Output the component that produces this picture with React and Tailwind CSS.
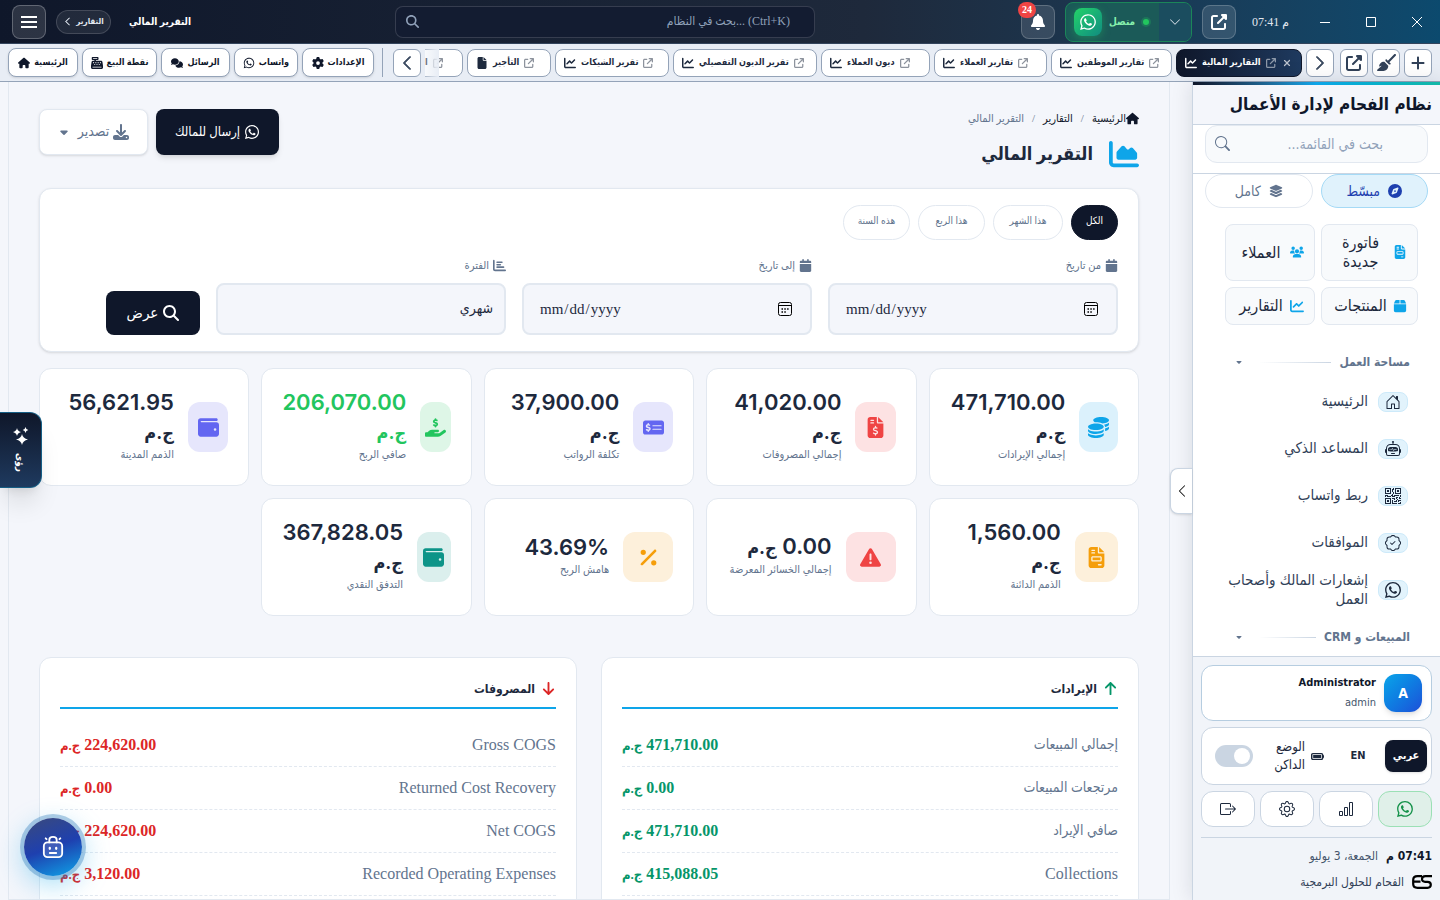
import React, { useState } from 'react';
import {
  FaArrowDown, FaArrowUp, FaArrowUpRightFromSquare, FaBatteryFull, FaBell, FaBox, FaBroom,
  FaCalendar, FaCaretDown, FaCashRegister, FaChartArea, FaChartBar, FaChartLine, FaCoins, FaComments,
  FaCompass, FaDownload, FaFile, FaFileInvoice, FaFileInvoiceDollar, FaGear, FaHandHoldingDollar,
  FaHouse, FaLayerGroup, FaMagnifyingGlass, FaMoneyCheckDollar, FaPercent, FaPlus,
  FaTriangleExclamation, FaUpRightFromSquare, FaUsers, FaWallet, FaWhatsapp, FaXmark,
} from 'react-icons/fa6';
import {
  BsBarChart, BsBoxArrowRight, BsChevronDown, BsChevronLeft, BsChevronRight, BsGear, BsHouseDoor,
  BsPatchCheck, BsQrCode, BsRobot, BsSearch, BsWhatsapp,
} from 'react-icons/bs';

const shortcuts = [
  { label: 'الرئيسية', icon: FaHouse, width: 'w-[70px]' },
  { label: 'نقطة البيع', icon: FaCashRegister, width: 'w-[75px]' },
  { label: 'الرسائل', icon: FaComments, width: 'w-[69px]' },
  { label: 'واتساب', icon: FaWhatsapp, width: 'w-[64px]' },
  { label: 'الإعدادات', icon: FaGear, width: 'w-[72px]' },
];

const openTabs = [
  { label: 'التقارير المالية', icon: FaChartLine, width: 'w-[126px]', active: true },
  { label: 'تقارير الموظفين', icon: FaChartLine, width: 'w-[121px]' },
  { label: 'تقارير العملاء', icon: FaChartLine, width: 'w-[113px]' },
  { label: 'ديون العملاء', icon: FaChartLine, width: 'w-[109px]' },
  { label: 'تقرير الديون التفصيلي', icon: FaChartLine, width: 'w-[144px]' },
  { label: 'تقرير الشيكات', icon: FaChartLine, width: 'w-[114px]' },
  { label: 'التأجير', icon: FaFile, width: 'w-[84px]' },
  { label: 'ا', icon: FaFile, width: 'w-[64px]' },
];

const cards = [
  { value: '471,710.00', currency: true, label: 'إجمالي الإيرادات', icon: FaCoins, tone: 'bg-[#dbf1fc] text-[#0ea5e9]' },
  { value: '41,020.00', currency: true, label: 'إجمالي المصروفات', icon: FaFileInvoiceDollar, tone: 'bg-[#fde2e3] text-[#ef4444]' },
  { value: '37,900.00', currency: true, label: 'تكلفة الرواتب', icon: FaMoneyCheckDollar, tone: 'bg-[#e6e6fc] text-[#6366f1]' },
  { value: '206,070.00', currency: true, label: 'صافي الربح', icon: FaHandHoldingDollar, tone: 'bg-[#def6e7] text-[#22c55e]', green: true },
  { value: '56,621.95', currency: true, label: 'الذمم المدينة', icon: FaWallet, tone: 'bg-[#e6e6fc] text-[#6366f1]' },
  { value: '1,560.00', currency: true, label: 'الذمم الدائنة', icon: FaFileInvoice, tone: 'bg-[#fdf0db] text-[#f59e0b]' },
  { value: '0.00', currency: true, label: 'إجمالي الخسائر المعرضة', icon: FaTriangleExclamation, tone: 'bg-[#fde2e3] text-[#ef4444]' },
  { value: '43.69%', label: 'هامش الربح', icon: FaPercent, tone: 'bg-[#fdf0db] text-[#f59e0b]' },
  { value: '367,828.05', currency: true, label: 'التدفق النقدي', icon: FaWallet, tone: 'bg-[#dbefed] text-[#0d9488]' },
];

const revenues = [
  { name: 'إجمالي المبيعات', amount: '471,710.00' },
  { name: 'مرتجعات المبيعات', amount: '0.00' },
  { name: 'صافي الإيراد', amount: '471,710.00' },
  { name: 'Collections', amount: '415,088.05', latin: true },
];

const expenses = [
  { name: 'Gross COGS', amount: '224,620.00', latin: true },
  { name: 'Returned Cost Recovery', amount: '0.00', latin: true },
  { name: 'Net COGS', amount: '224,620.00', latin: true },
  { name: 'Recorded Operating Expenses', amount: '3,120.00', latin: true },
];

const ranges = [
  { label: 'الكل', width: 'w-[47px]' },
  { label: 'هذا الشهر', width: 'w-[70px]' },
  { label: 'هذا الربع', width: 'w-[67px]' },
  { label: 'هذه السنة', width: 'w-[67px]' },
];

const menu = [
  { label: 'الرئيسية', icon: BsHouseDoor },
  { label: 'المساعد الذكي', icon: BsRobot },
  { label: 'ربط واتساب', icon: BsQrCode },
  { label: 'الموافقات', icon: BsPatchCheck },
  { label: 'إشعارات المالك وأصحاب العمل', icon: BsWhatsapp },
];

const TopBar = () => (
  <header className="flex h-11 shrink-0 items-center border-b border-[#33445c] bg-linear-to-r from-[#0f172a] via-[#1e293b] via-60% to-[#0c4a6e] px-3 text-white">
    <button aria-label="القائمة" className="flex size-[34px] items-center justify-center rounded-lg border border-white/25 bg-white/12">
      <svg width="16" height="14" viewBox="0 0 16 14" stroke="currentColor" strokeWidth="2"><path d="M0 2h16M0 7h16M0 12h16" /></svg>
    </button>
    <button className="ml-[10px] flex h-6 w-[55px] items-center justify-center gap-1 rounded-full border border-white/15 bg-white/8 text-[8px] font-bold whitespace-nowrap text-slate-200">
      <BsChevronLeft className="size-[9px] shrink-0 stroke-1" /> التقارير
    </button>
    <span className="ml-[18px] text-[10px] font-bold whitespace-nowrap">التقرير المالي</span>

    <div className="flex flex-1 justify-center pr-[2px]">
      <label className="relative w-[420px]">
        <FaMagnifyingGlass className="absolute top-[9px] left-[11px] size-[13px] text-slate-400" />
        <input type="text" placeholder="بحث في النظام... (Ctrl+K)"
          className="h-8 w-full rounded-lg border border-white/15 bg-[#131c31] pr-6 pl-9 text-right text-xs text-white placeholder-slate-400 focus:outline-none" />
      </label>
    </div>

    <button aria-label="الإشعارات" className="relative flex size-[34px] items-center justify-center rounded-lg border border-white/20 bg-white/12">
      <FaBell className="size-4" />
      <span className="absolute -top-1 -left-1 flex h-4 w-[18px] items-center justify-center rounded-full bg-[#ef4444] text-[10px] font-bold">24</span>
    </button>
    <div className="ml-[10px] flex h-10 w-[127px] overflow-hidden rounded-lg border border-[#1b8659] bg-[#1b5a58]">
      <button className="flex flex-1 items-center pl-2 text-[#86efac]">
        <span className="flex size-7 items-center justify-center rounded-lg bg-linear-to-br from-[#25d366] to-[#128c7e] text-white shadow-[0_2px_8px_#22c55e60]">
          <FaWhatsapp className="size-[18px]" />
        </span>
        <span className="ml-[7px] text-[10px] font-bold">متصل</span>
        <span className="ml-2 size-[6px] rounded-full bg-[#22c55e] shadow-[0_0_0_2px_#22c55e40]" />
      </button>
      <button aria-label="المزيد" className="flex w-8 items-center justify-center bg-[#1b4d5f] text-slate-200">
        <BsChevronDown className="size-3" />
      </button>
    </div>
    <button aria-label="نافذة جديدة" className="ml-[10px] flex size-[34px] items-center justify-center rounded-lg border border-white/20 bg-white/12">
      <FaUpRightFromSquare className="size-4" />
    </button>
    <span className="ml-4 w-9 text-xs whitespace-nowrap text-slate-200">07:41 م</span>
    <div className="ml-8 flex items-center gap-9 pr-[6px]">
      <button aria-label="تصغير"><svg width="10" height="10" viewBox="0 0 10 10" stroke="white"><path d="M0 5.5h10" /></svg></button>
      <button aria-label="تكبير"><svg width="10" height="10" viewBox="0 0 10 10" stroke="white" fill="none"><path d="M.5 .5h9v9h-9z" /></svg></button>
      <button aria-label="إغلاق"><svg width="10" height="10" viewBox="0 0 10 10" stroke="white"><path d="M0 0l10 10M10 0L0 10" /></svg></button>
    </div>
  </header>
);

const ToolButton = ({ label, children }) => (
  <button aria-label={label} className="flex h-7 w-7 shrink-0 items-center justify-center rounded-md border border-[#94a3b8] bg-white text-slate-700">
    {children}
  </button>
);

const TabBar = () => (
  <nav className="flex h-[38px] shrink-0 items-center border-b border-[#94a3b8] bg-[#e8edf5] px-2">
    <div className="flex gap-1">
      {shortcuts.map(({ label, icon: Icon, width }) => (
        <button key={label} className={`flex h-[29px] items-center justify-center gap-1 rounded-lg border border-[#94a3b8] bg-white text-[9px] font-bold whitespace-nowrap text-[#0f172a] shadow-sm ${width}`}>
          <Icon className="h-3 w-auto shrink-0" /> {label}
        </button>
      ))}
    </div>
    <span className="mx-2 h-[29px] w-px bg-[#94a3b8]" />
    <div className="flex min-w-0 flex-1 items-center gap-1 pl-[2px]">
      <ToolButton label="السابق"><BsChevronLeft className="size-4 stroke-1" /></ToolButton>
      <div className="relative min-w-0 flex-1 overflow-hidden">
        <div dir="rtl" className="flex gap-1">
          {openTabs.map(({ label, icon: Icon, width, active }) => (
            <button key={label} dir="ltr"
              className={`flex h-7 shrink-0 items-center gap-[5px] rounded-lg border pl-2 text-[9px] font-bold whitespace-nowrap ${width} ${active ? 'border-[#0f172a] bg-linear-to-r from-[#0f172a] to-[#1e3a5f] text-white' : 'border-[#94a3b8] bg-white text-slate-800'}`}>
              <Icon className="size-3 shrink-0" />
              {label}
              <FaArrowUpRightFromSquare className="size-[10px] shrink-0 opacity-50" />
              {active && <FaXmark className="ml-px size-[10px] shrink-0 opacity-70" />}
            </button>
          ))}
        </div>
        <span className="absolute top-0 left-0 h-7 w-[14px] bg-linear-to-r from-[#e8edf5]/30 to-[#e8edf5]" />
      </div>
      <ToolButton label="التالي"><BsChevronRight className="size-4 stroke-1" /></ToolButton>
    </div>
    <div className="ml-[6px] flex gap-1">
      <ToolButton label="فتح"><FaUpRightFromSquare className="size-4" /></ToolButton>
      <ToolButton label="تنظيف"><FaBroom className="size-[19px]" /></ToolButton>
      <ToolButton label="إضافة"><FaPlus className="size-4" /></ToolButton>
    </div>
  </nav>
);

const StatCard = ({ value, currency, label, icon: Icon, tone, green }) => (
  <div className="flex h-[118px] items-center gap-[14px] rounded-xl border border-slate-200 bg-white px-5">
    <div className={`flex h-[50px] w-[50px] items-center justify-center rounded-xl ${tone}`}>
      <Icon className="h-[21px] w-auto shrink-0" />
    </div>
    <div className="pb-[6px]">
      <div className={`font-[Inter,'DejaVu_Sans_Condensed',sans-serif] text-[22px] leading-[29px] font-semibold ${green ? 'text-[#22c55e]' : 'text-slate-800'}`}>
        {value}{currency && <> <span className="text-lg leading-7 font-bold">ج.م</span></>}
      </div>
      <div className="text-[11px] leading-[14px] text-slate-500">{label}</div>
    </div>
  </div>
);

const DetailPanel = ({ title, icon, rows, valueColor }) => (
  <section className="rounded-xl border border-slate-200 bg-white px-5 pt-4 pb-5">
    <h2 className="flex h-[35px] items-center gap-[6px] border-b-2 border-[#0ea5e9] pb-1 text-xs font-bold text-slate-800">
      {icon} {title}
    </h2>
    <dl className="pt-[15px]">
      {rows.map(({ name, amount, latin }) => (
        <div key={name} className="flex h-[43px] items-center justify-between border-b border-dashed border-slate-200">
          <dt className={`text-slate-500 ${latin ? 'text-base' : 'text-sm'}`}>{name}</dt>
          <dd className={`text-base font-bold ${valueColor}`}>{amount} <span className="text-[13px]">ج.م</span></dd>
        </div>
      ))}
    </dl>
  </section>
);

const DateField = ({ id, label }) => (
  <div className="w-[290px]">
    <label htmlFor={id} className="flex h-5 items-center gap-1 text-[11px] text-slate-500"><FaCalendar className="size-[13px]" /> {label}</label>
    <div className="relative mt-2">
      <input id={id} type="date" dir="ltr"
        className="h-[52px] w-full rounded-lg border-2 border-slate-200 bg-[#f4f6fb] pr-[18px] pl-[15px] text-[15px] text-slate-800 [&::-webkit-calendar-picker-indicator]:opacity-0" />
      <svg className="pointer-events-none absolute top-[19px] right-5" width="14" height="14" viewBox="0 0 14 14" fill="none" stroke="black">
        <rect x=".5" y=".5" width="13" height="13" rx="2" />
        <path d="M1 3.500h12" />
        <path d="M3.500 7h1.500M6.300 7h1.500M9.100 7h1.500M3.500 10h1.500M6.300 10h1.500" strokeWidth="1.500" />
      </svg>
    </div>
  </div>
);

const Report = () => {
  const [range, setRange] = useState('الكل');

  return (
    <main dir="rtl" className="min-w-0 flex-1 overflow-hidden bg-[#f4f6fb] pr-[22px] pl-2">
      <div className="h-full overflow-hidden border border-t-0 border-slate-200 px-[30px] pt-[27px]">
        <div className="flex items-start justify-between">
          <div>
            <div className="flex h-[18px] items-center text-[11px] text-[#0f172a]">
              <FaHouse className="h-[13px] w-auto" />
              <a href="#home">الرئيسية</a>
              <span className="mx-2 text-slate-500">/</span>
              <a href="#reports">التقارير</a>
              <span className="mx-2 text-slate-500">/</span>
              <span className="text-slate-500">التقرير المالي</span>
            </div>
            <h1 className="mt-3 flex h-[30px] items-center gap-4 text-lg font-bold text-slate-800">
              <FaChartArea className="size-[30px] text-[#0ea5e9]" /> التقرير المالي
            </h1>
          </div>
          <div className="flex gap-2">
            <button className="flex h-[46px] w-[123px] items-center justify-center gap-1 rounded-lg bg-[#0f172a] text-[13px] text-white shadow-md">
              <FaWhatsapp className="size-4" /> إرسال للمالك
            </button>
            <button className="flex h-[46px] w-[109px] items-center justify-center gap-1 rounded-lg border border-slate-200 bg-white text-sm text-slate-500 shadow-sm">
              <FaDownload className="size-4" /> تصدير <FaCaretDown className="mr-1 size-3" />
            </button>
          </div>
        </div>

        <form onSubmit={e => e.preventDefault()} className="mt-[19px] rounded-xl border border-slate-200 bg-white px-5 py-4 shadow-sm">
          <div className="flex gap-2">
            {ranges.map(({ label, width }) => (
              <button key={label} type="button" onClick={() => setRange(label)}
                className={`h-[35px] rounded-full border pb-1 text-[10px] whitespace-nowrap ${width} ${range === label ? 'border-[#0f172a] bg-[#0f172a] text-white' : 'border-slate-200 bg-white text-slate-500'}`}>
                {label}
              </button>
            ))}
          </div>
          <div className="mt-[15px] flex items-end gap-4">
            <DateField id="from" label="من تاريخ" />
            <DateField id="to" label="إلى تاريخ" />
            <div className="w-[290px]">
              <label htmlFor="period" className="flex h-5 items-center gap-1 text-[11px] text-slate-500"><FaChartBar className="size-[13px]" /> الفترة</label>
              <select id="period" className="mt-2 h-[52px] w-full appearance-none rounded-lg border-2 border-slate-200 bg-[#f4f6fb] px-[11px] text-sm text-slate-800">
                <option>شهري</option>
              </select>
            </div>
            <button type="submit" className="flex h-11 w-[94px] items-center justify-center gap-[5px] rounded-lg bg-[#0f172a] text-[15px] text-white">
              <FaMagnifyingGlass className="size-4" /> عرض
            </button>
          </div>
        </form>

        <div className="mt-4 grid grid-cols-5 gap-3">
          {cards.map(card => <StatCard key={card.label} {...card} />)}
        </div>

        <div className="mt-[41px] grid grid-cols-2 gap-6">
          <DetailPanel title="الإيرادات" rows={revenues} valueColor="text-[#059669]"
            icon={<FaArrowUp className="size-[15px] text-[#059669]" />} />
          <DetailPanel title="المصروفات" rows={expenses} valueColor="text-[#dc2626]"
            icon={<FaArrowDown className="size-[15px] text-[#dc2626]" />} />
        </div>
      </div>
    </main>
  );
};

const SectionTitle = ({ children }) => (
  <h3 className="flex h-5 items-center gap-2 px-[30px] text-xs font-bold text-slate-500">
    <span className="whitespace-nowrap">{children}</span>
    <span className="h-px flex-1 bg-linear-to-l from-slate-300 to-transparent" />
    <FaCaretDown className="mr-2 ml-3 size-2" />
  </h3>
);

const QuickLink = ({ icon: Icon, children }) => (
  <a href="#quick" className="flex items-center justify-between gap-1 rounded-lg border border-slate-200 bg-slate-50 px-[10px] pt-2 pb-[9px] text-center text-base leading-[19px] text-slate-800">
    <Icon className="h-[14px] w-auto shrink-0 text-[#0ea5e9]" />
    <span className="flex-1">{children}</span>
  </a>
);

const Sidebar = () => {
  const [dark, setDark] = useState(false);

  return (
    <aside dir="rtl" className="relative flex w-[248px] shrink-0 flex-col border-l border-slate-300 bg-white font-['DejaVu_Sans_Condensed',sans-serif] shadow-[0_0_20px_#0f172a20]">
      <button aria-label="طي القائمة" className="absolute top-[386px] -left-[23px] flex h-[46px] w-[22px] items-center justify-center rounded-l-lg border border-r-0 border-slate-300 bg-white shadow-sm">
        <BsChevronLeft className="size-[14px]" />
      </button>
      <div className="h-[3px] bg-linear-to-r from-[#0f172a] via-[#0ea5e9] to-[#14b8a6]" />
      <div className="flex h-10 items-center border-b border-slate-300 bg-[#f4f6fb] px-2 text-[17px] font-bold whitespace-nowrap text-[#0f172a]">نظام الفحام لإدارة الأعمال</div>
      <div className="border-b border-slate-300 px-3 pb-[10px]">
        <label className="relative block">
          <BsSearch className="absolute top-[11px] left-[10px] size-[15px] text-slate-500" />
          <input type="text" placeholder="بحث في القائمة..." className="h-[38px] w-full rounded-xl border border-slate-200 bg-slate-50 pr-11 pl-9 text-sm text-slate-800 placeholder-slate-400" />
        </label>
      </div>
      <div className="grid grid-cols-2 gap-2 px-3">
        <button className="flex h-[34px] items-center justify-center gap-2 rounded-full border border-[#a5daf6] bg-[#e0f2fc] text-sm text-[#1e40af]">
          <FaCompass className="size-[14px]" /> مبسّط
        </button>
        <button className="flex h-[34px] items-center justify-center gap-2 rounded-full border border-slate-200 text-sm text-slate-500">
          <FaLayerGroup className="h-[14px] w-auto" /> كامل
        </button>
      </div>
      <div className="mt-4 grid grid-cols-[97fr_90fr] gap-[6px] pr-[22px] pl-8">
        <QuickLink icon={FaFileInvoice}>فاتورة<br />جديدة</QuickLink>
        <QuickLink icon={FaUsers}>العملاء</QuickLink>
        <QuickLink icon={FaBox}>المنتجات</QuickLink>
        <QuickLink icon={FaChartLine}>التقارير</QuickLink>
      </div>

      <div className="min-h-0 flex-1 overflow-hidden pt-[27px]">
        <SectionTitle>مساحة العمل</SectionTitle>
        <ul className="pt-[6px]">
          {menu.map(({ label, icon: Icon }) => (
            <li key={label}>
              <a href="#menu" className="flex h-[47px] items-center gap-[10px] pr-8 pl-7 text-[15px] leading-[19px] text-slate-700">
                <span className="flex h-5 w-[30px] shrink-0 items-center justify-center rounded-lg border border-[#cdeafa] bg-[#e2f3fc] text-slate-800"><Icon className="size-4" /></span>
                {label}
              </a>
            </li>
          ))}
        </ul>
        <div className="pt-[14px]"><SectionTitle>المبيعات و CRM</SectionTitle></div>
      </div>

      <footer className="shrink-0 border-t border-slate-300 bg-[#f1f4f9] px-2 pt-2 pb-2 text-slate-800">
        <div className="flex h-14 items-center gap-2 rounded-xl border border-[#b6cde0] bg-white px-[9px]">
          <span className="flex size-[38px] items-center justify-center rounded-xl bg-linear-to-br from-[#0ea5e9] to-[#1d4ed8] text-sm font-bold text-white shadow-md">A</span>
          <span>
            <b className="block text-[11px] leading-5 text-[#0f172a]">Administrator</b>
            <span className="block text-[11px] leading-5 text-slate-600">admin</span>
          </span>
        </div>
        <div className="mt-[6px] flex h-[58px] items-center rounded-xl border border-slate-300 bg-white pr-1 pl-[13px] text-[11px]">
          <button className="h-8 w-[42px] rounded-lg bg-[#0f172a] font-bold text-white shadow">عربي</button>
          <button className="w-[54px] font-bold">EN</button>
          <FaBatteryFull className="mr-[7px] size-[13px]" />
          <label htmlFor="dark" className="mr-[6px] w-10 text-right text-[13px] leading-[18px]">الوضع الداكن</label>
          <input id="dark" type="checkbox" checked={dark} onChange={e => setDark(e.target.checked)}
            className="mr-auto flex h-[22px] w-[38px] appearance-none items-center rounded-full bg-slate-300 px-[3px] before:size-4 before:rounded-full before:bg-white checked:justify-end checked:bg-sky-500" />
        </div>
        <div className="mt-[6px] grid grid-cols-4 gap-[5px]">
          <button aria-label="واتساب" className="flex h-9 items-center justify-center rounded-xl border border-[#9be0b5] bg-[#e0f0e9] text-[#15924a]"><BsWhatsapp className="size-4" /></button>
          <button aria-label="إحصائيات" className="flex h-9 items-center justify-center rounded-xl border border-slate-300 bg-white"><BsBarChart className="size-4" /></button>
          <button aria-label="إعدادات" className="flex h-9 items-center justify-center rounded-xl border border-slate-300 bg-white"><BsGear className="size-4" /></button>
          <button aria-label="خروج" className="flex h-9 items-center justify-center rounded-xl border border-slate-300 bg-white"><BsBoxArrowRight className="size-4" /></button>
        </div>
        <div className="mt-[10px] flex items-center gap-2 border-t border-slate-300 pt-2 text-xs leading-5">
          <b className="text-[#0f172a]">07:41 م</b>
          <span className="text-slate-600">الجمعة، 3 يوليو</span>
        </div>
        <div className="mt-[6px] flex items-center gap-2 text-xs leading-5 text-slate-700">
          <svg width="20" height="14" viewBox="0 0 20 14" fill="none" stroke="black" strokeWidth="2.2">
            <path d="M10 1.2H5.5Q1.2 1.2 1.2 5v4Q1.2 12.8 5.5 12.8H9M2 6.6h6.5" />
            <path d="M20 1.2h-6.5q-3.5 0-3.5 2.9t3.5 2.7h2q3.3 0 3.3 3t-3.3 3H9" />
          </svg>
          الفحام للحلول البرمجية
        </div>
      </footer>
    </aside>
  );
};

const App = () => (
  <div className="relative flex h-screen flex-col overflow-hidden bg-[#f4f6fb] font-['Liberation_Serif','DejaVu_Sans_Condensed',serif]">
    <TopBar />
    <TabBar />
    <div className="flex min-h-0 flex-1">
      <Report />
      <Sidebar />
    </div>

    <button className="absolute top-[412px] left-0 flex h-[76px] w-[42px] flex-col items-center justify-center gap-2 rounded-r-xl border border-l-0 border-[#155e85] bg-linear-to-b from-[#0f172a] to-[#1e3a5f] text-white shadow-xl">
      <svg width="16" height="18" viewBox="0 0 16 18" fill="currentColor">
        <path d="M9 7q.8 4.200 6 5.500-5.200 1.300-6 5.500-.8-4.200-6-5.500Q8.200 11.200 9 7z" />
        <path d="M4 1q.5 3 4 4-3.500 1-4 4-.5-3-4-4 3.500-1 4-4z" />
        <path d="M12.500 0q.4 2.300 2.800 3-2.400.7-2.800 3-.4-2.300-2.800-3 2.400-.7 2.800-3z" />
      </svg>
      <span className="text-[10px] font-bold [writing-mode:vertical-rl]">رؤى</span>
    </button>
    <button aria-label="المساعد" className="absolute bottom-[24px] left-6 flex size-[58px] items-center justify-center rounded-full bg-linear-[160deg,#3b4a7c,#1e40af_50%,#0ea5e9] text-white shadow-[0_0_0_4px_#1e6fb455,0_8px_28px_#0ea5e966]">
      <svg width="22" height="24" viewBox="0 0 24 26" fill="none" stroke="currentColor" strokeWidth="2" strokeLinecap="round">
        <rect x="2" y="8" width="20" height="16" rx="4" fill="white" fillOpacity=".15" />
        <path d="M8 8V5q0-3 4-3t4 3v3M4 3.500l1 1M20 3.500l-1 1M8.500 19.500h7" />
        <path d="M8.500 14v1M15.500 14v1" strokeWidth="2.500" />
      </svg>
    </button>
  </div>
);

export default App;
